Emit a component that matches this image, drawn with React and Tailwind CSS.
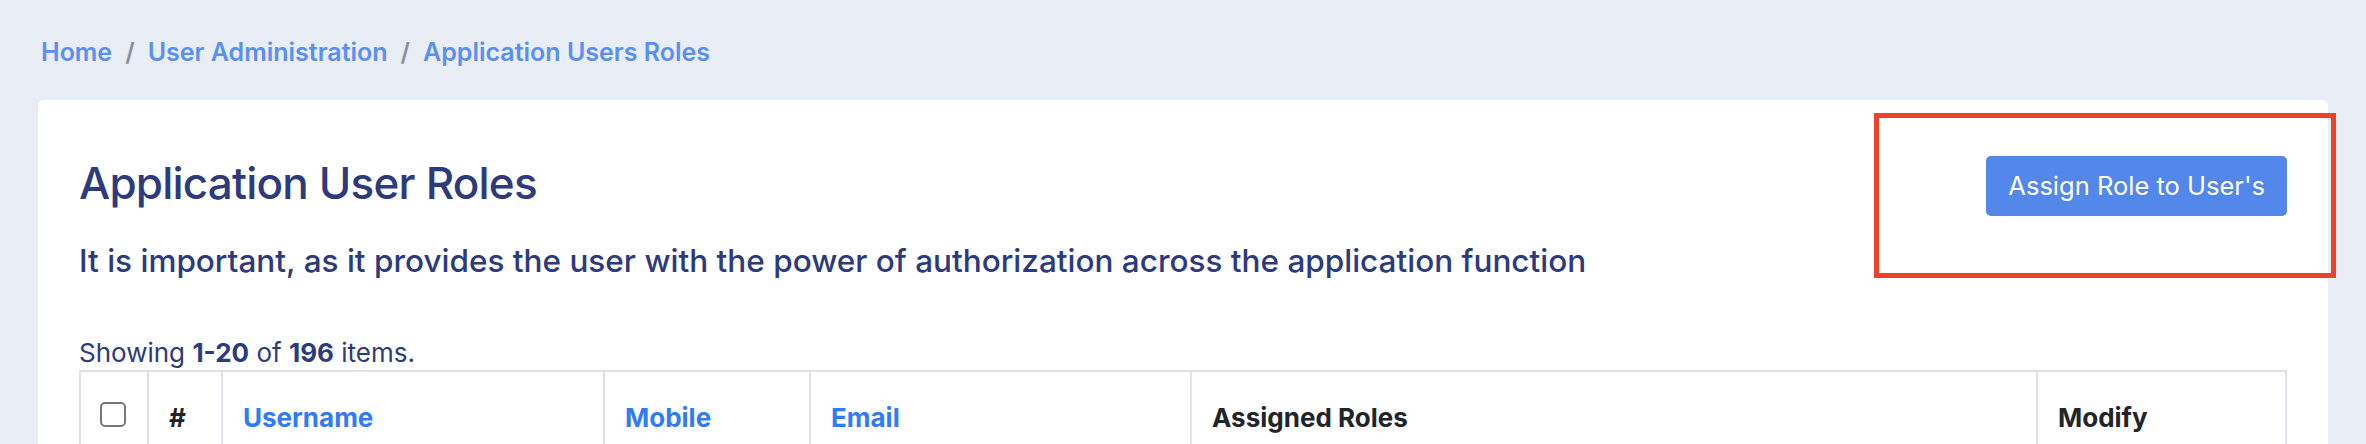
import React from "react";

const columns = [
  { label: "Username", sortable: true },
  { label: "Mobile", sortable: true },
  { label: "Email", sortable: true },
  { label: "Assigned Roles", sortable: false },
  { label: "Modify", sortable: false },
];

const App = () => {
  return (
    <div
      className="relative min-h-[444px] bg-[#e9edf6] overflow-hidden"
      style={{ fontFamily: "Inter, 'Noto Sans', sans-serif" }}
    >
      {/* Breadcrumb */}
      <nav className="px-[41px] pt-[34px] flex items-center text-[25px] leading-[36px] font-semibold">
        <a className="text-[#5a90f0]">Home</a>
        <span className="mx-[13px] text-[#8a9099]">/</span>
        <a className="text-[#5a90f0]">User Administration</a>
        <span className="mx-[13px] text-[#8a9099]">/</span>
        <a className="text-[#5a90f0]">Application Users Roles</a>
      </nav>

      {/* Card */}
      <div className="mx-[38px] mt-[30px] bg-white rounded-[6px] px-[41px] pt-[56px] pb-10">
        <div className="flex items-start justify-between">
          <div>
            <h1 className="text-[44px] leading-[54px] font-medium tracking-[-0.8px] text-[#2d3a7c]">
              Application User Roles
            </h1>
            <p className="mt-[33px] text-[31.5px] leading-[36px] font-medium text-[#2d3a7c]">
              It is important, as it provides the user with the power of authorization across the application function
            </p>
          </div>
          <button className="h-[60px] px-[22px] rounded-[5px] bg-[#5387e9] text-white text-[25.5px] font-normal">
            Assign Role to User's
          </button>
        </div>

        <p className="mt-[57px] text-[26px] leading-[34px] text-[#2d3a7c]">
          Showing <b className="font-bold">1-20</b> of <b className="font-bold">196</b> items.
        </p>

        {/* Table */}
        <div className="border-2 border-[#dfe2e8] grid grid-cols-[68px_74px_382px_206px_381px_846px_249px]">
          <div className="border-r-2 border-[#dfe2e8] px-[19px] pt-[30px] pb-6">
            <span className="block w-[26px] h-[25px] border-2 border-[#777] rounded-[5px]" />
          </div>
          <div className="border-r-2 border-[#dfe2e8] px-5 pt-[29px] pb-6 text-[26px] leading-[34px] font-bold text-[#212529]">
            #
          </div>
          {columns.map((c, i) => (
            <div
              key={c.label}
              className={
                "px-5 pt-[29px] pb-6 text-[26px] leading-[34px] font-bold " +
                (i < columns.length - 1 ? "border-r-2 border-[#dfe2e8] " : "") +
                (c.sortable ? "text-[#2f7cf6]" : "text-[#212529]")
              }
            >
              {c.label}
            </div>
          ))}
        </div>
      </div>

      {/* Annotation box */}
      <div className="absolute left-[1874px] top-[113px] w-[462px] h-[165px] border-[5px] border-[#ee4227]" />
    </div>
  );
};

export default App;
